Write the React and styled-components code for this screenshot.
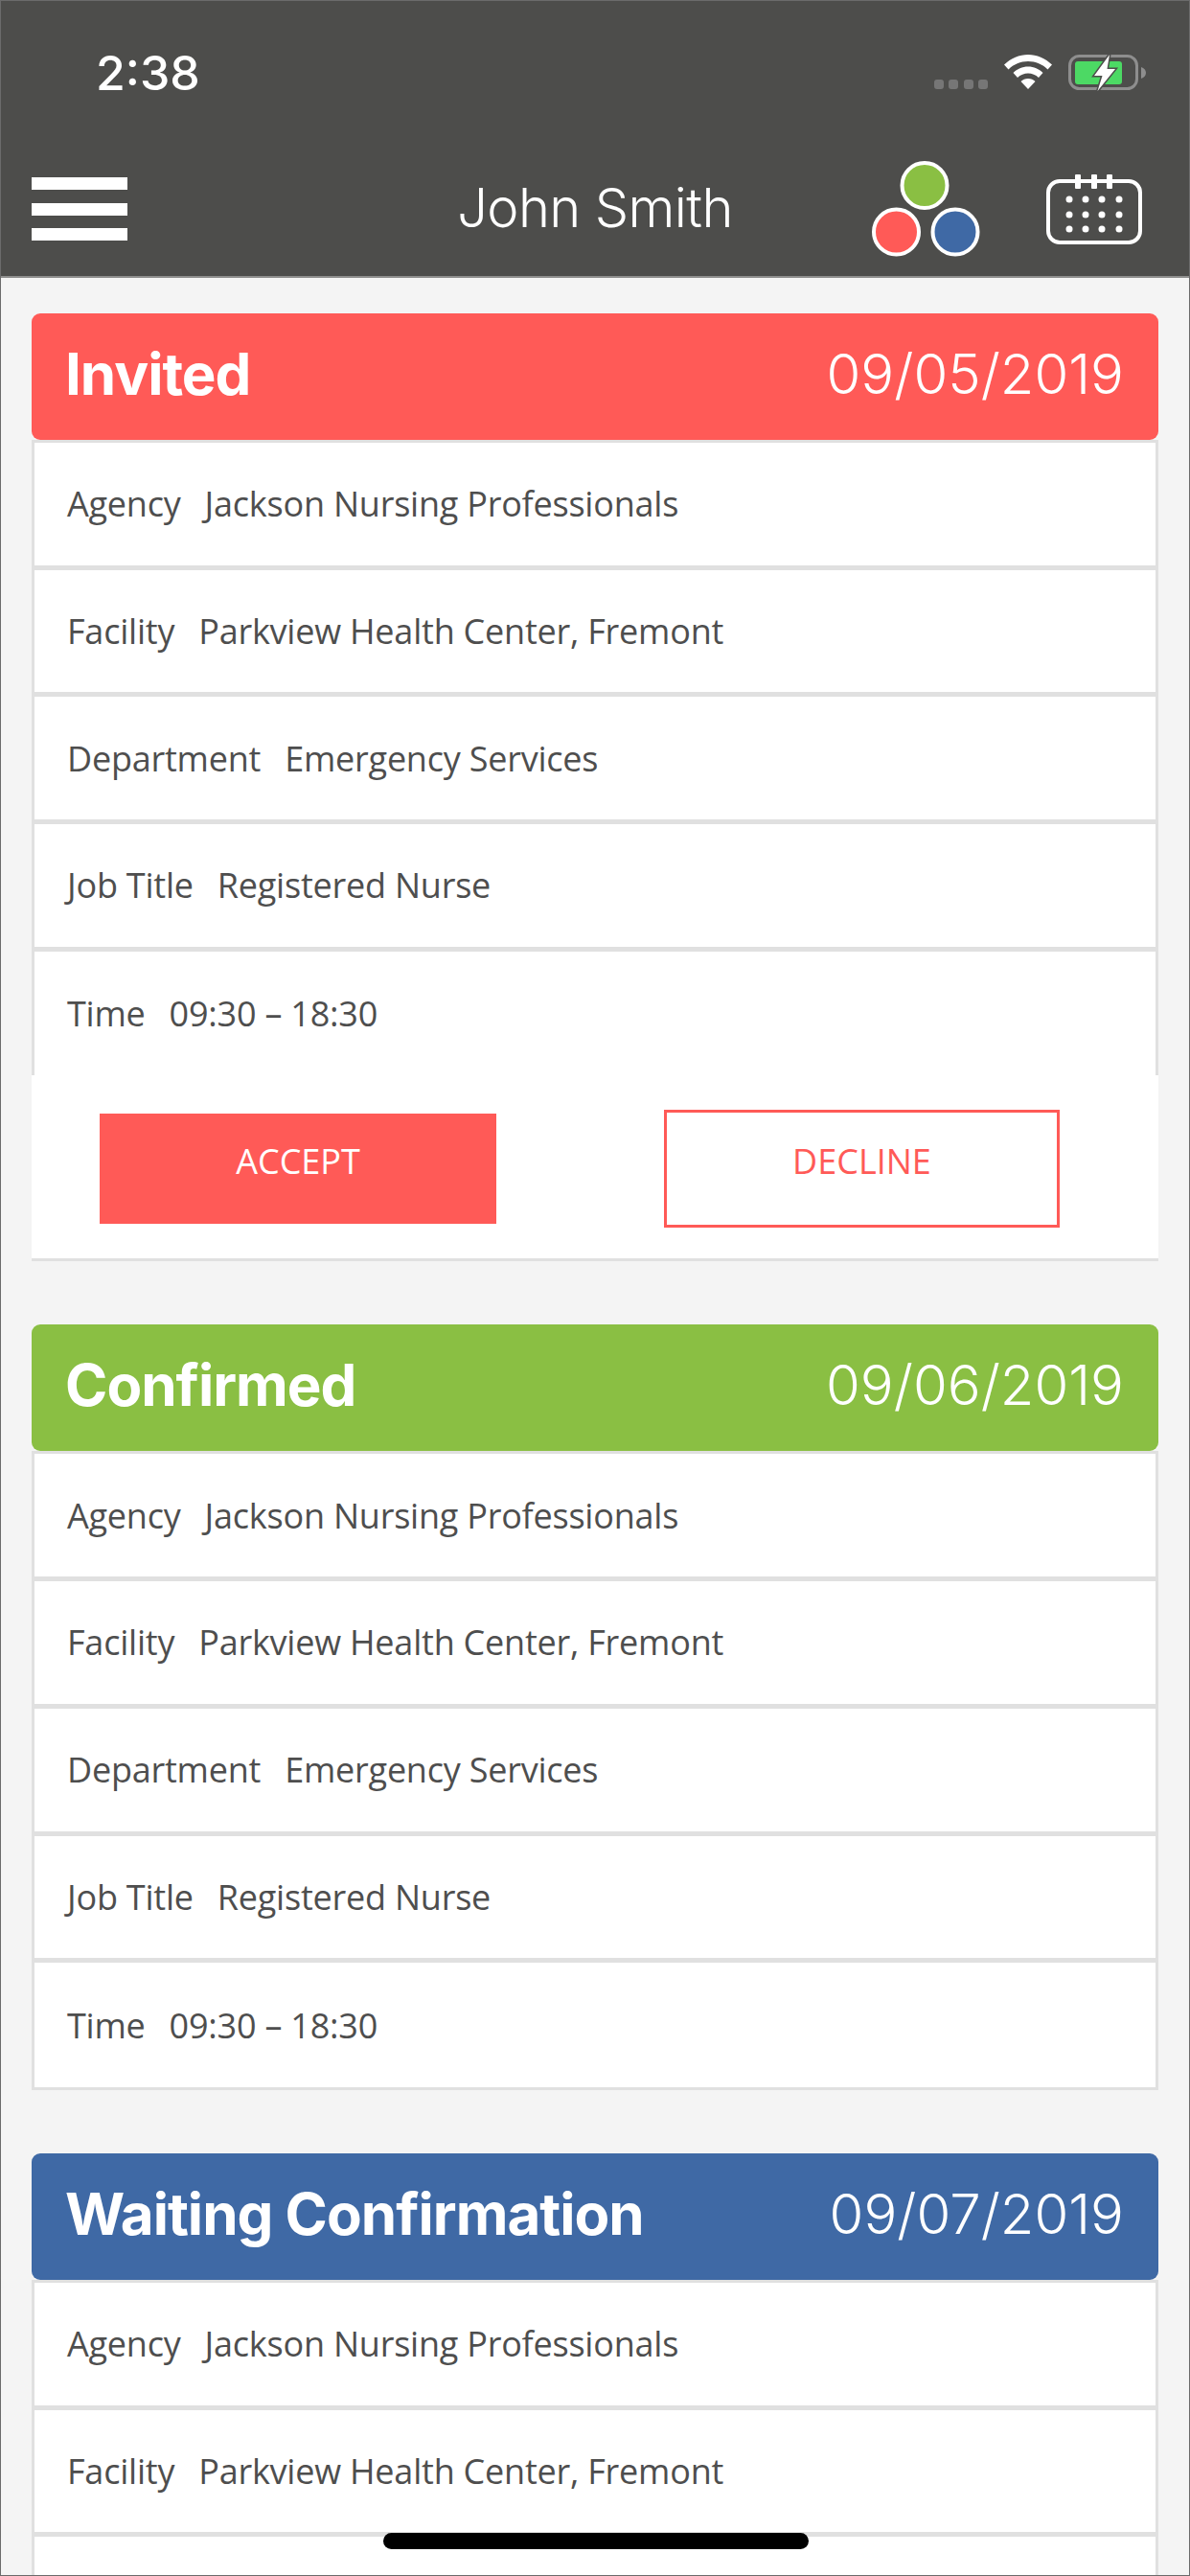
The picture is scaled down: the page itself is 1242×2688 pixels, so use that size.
import React from 'react'
import styled, { createGlobalStyle } from 'styled-components'

const colors = {
  red: '#ff5a57',
  green: '#8abf43',
  blue: '#3f69a5',
  dark: '#4d4d4b',
  line: '#e0e0e0',
  text: '#4e4e4e',
}

const GlobalStyle = createGlobalStyle`
  html, body {
    margin: 0;
    padding: 0;
    background: #f4f4f4;
  }
  * {
    box-sizing: border-box;
  }
`

const Page = styled.div`
  background: #f4f4f4;
  border: 1px solid #6b6b6b;
  height: 2688px;
  overflow: hidden;
  position: relative;
  width: 1242px;
`

const TopBar = styled.header`
  background: ${colors.dark};
  border-bottom: 2px solid #8f8f8e;
  display: flex;
  flex-direction: column;
  height: 289px;
`

const StatusBar = styled.div`
  align-items: flex-start;
  display: flex;
  height: 132px;
  justify-content: space-between;
  padding: 56px 44px 0 99px;
`

const Clock = styled.span`
  color: #fff;
  font-family: Inter, "Liberation Sans", sans-serif;
  font-size: 50px;
  font-weight: 500;
  line-height: 38px;
`

const StatusIcons = styled.div`
  align-items: flex-start;
  display: flex;
`

const SignalDots = styled.div`
  display: flex;
  gap: 5.5px;
  margin: 26px 17px 0 0;
`

const SignalDot = styled.span`
  background: #767676;
  border-radius: 3px;
  height: 10px;
  width: 10px;
`

const WifiIcon = styled.svg`
  display: block;
  margin-right: 17px;
`

const NavRow = styled.nav`
  align-items: start;
  display: grid;
  flex: 1;
  grid-template-columns: 1fr auto 1fr;
  padding: 0 49px 0 32px;
`

const MenuButton = styled.div`
  display: flex;
  flex-direction: column;
  gap: 13.5px;
  margin-top: 52px;
  width: 100px;
`

const MenuBar = styled.span`
  background: #fff;
  display: block;
  height: 13px;
`

const UserName = styled.div`
  color: #fff;
  font-family: Inter, "Liberation Sans", sans-serif;
  font-size: 56px;
  font-weight: 300;
  letter-spacing: -0.6px;
  line-height: 60px;
  margin: 54px 0 0 17px;
  text-align: center;
`

const NavIcons = styled.div`
  align-items: flex-start;
  display: flex;
  justify-content: flex-end;
  gap: 65px;
  padding-top: 35px;
`

const CalendarSvg = styled.svg`
  display: block;
  margin-top: 14px;
`

const CardList = styled.main`
  display: flex;
  flex-direction: column;
  gap: 66px;
  padding: 37px 32px 0;
`

const Card = styled.section`
  display: flex;
  flex-direction: column;
`

const CardHeader = styled.div`
  align-items: center;
  background: ${({ $tone }) => colors[$tone]};
  border-radius: 9px;
  color: #fff;
  display: flex;
  font-family: Inter, "Liberation Sans", sans-serif;
  height: 132px;
  justify-content: space-between;
  padding: 0 36px 6px 35px;
`

const Status = styled.h2`
  font-size: 60px;
  font-weight: 700;
  letter-spacing: -1px;
  margin: 0;
`

const DateText = styled.span`
  font-size: 58px;
  font-weight: 350;
`

const Row = styled.div`
  align-items: center;
  background: #fff;
  border: 3px solid ${colors.line};
  border-bottom-width: ${({ $closing }) => ($closing ? 3 : 2)}px;
  border-bottom-style: ${({ $open }) => ($open ? 'none' : 'solid')};
  color: ${colors.text};
  display: flex;
  font-family: "Open Sans", "Liberation Sans", sans-serif;
  font-size: 36px;
  gap: 25px;
  height: ${({ $closing }) => ($closing ? 135.7 : 132.7)}px;
  letter-spacing: -0.22px;
  padding: 0 0 0 34px;
`

const ActionPanel = styled.div`
  background: #fff;
  border-bottom: 3px solid ${colors.line};
  display: flex;
  height: 194px;
  justify-content: space-between;
  padding: 36px 103px 0 71px;
`

const ActionButton = styled.button`
  background: ${({ $filled }) => ($filled ? colors.red : '#fff')};
  border: ${({ $filled }) => ($filled ? 'none' : `3px solid ${colors.red}`)};
  border-radius: 0;
  color: ${({ $filled }) => ($filled ? '#fff' : colors.red)};
  font-family: "Open Sans", "Liberation Sans", sans-serif;
  font-size: 36px;
  height: ${({ $filled }) => ($filled ? 115 : 123)}px;
  margin-top: ${({ $filled }) => ($filled ? 4 : 0)}px;
  padding: 0 0 16px;
  width: ${({ $filled }) => ($filled ? 414 : 413)}px;
`

const HomeIndicator = styled.div`
  background: #000;
  border-radius: 9px;
  bottom: 27px;
  height: 17px;
  left: 399px;
  position: absolute;
  width: 444px;
`

const details = [
  ['Agency', 'Jackson Nursing Professionals'],
  ['Facility', 'Parkview Health Center, Fremont'],
  ['Department', 'Emergency Services'],
  ['Job Title', 'Registered Nurse'],
  ['Time', '09:30 – 18:30'],
]

// the last card runs off the bottom of the screen, only two rows are readable
const shifts = [
  { status: 'Invited', date: '09/05/2019', tone: 'red', rows: details, actions: true },
  { status: 'Confirmed', date: '09/06/2019', tone: 'green', rows: details },
  { status: 'Waiting Confirmation', date: '09/07/2019', tone: 'blue', rows: details.slice(0, 2), cutOff: true },
]

const Battery = () => (
  <svg width="82" height="40" viewBox="0 0 82 40">
    <rect x="1.5" y="1.5" width="70" height="34" rx="10" fill="none" stroke="#8e8e8e" strokeWidth="3" />
    <rect x="7" y="7" width="49" height="24" rx="3" fill="#4cd964" />
    <path d="M76 13 C79 14 81 16 81 19 C81 22 79 24 76 25 Z" fill="#8e8e8e" />
    <path
      d="M43 0 L27 22 H35.5 L30.5 38 L49 15 H40.5 Z"
      fill="#fff"
      stroke={colors.dark}
      strokeWidth="3"
      paintOrder="stroke"
    />
  </svg>
)

const StatusDots = () => (
  <svg width="120" height="100" viewBox="0 0 120 100">
    <circle cx="58" cy="25.5" r="23.5" fill={colors.green} stroke="#fff" strokeWidth="4" />
    <circle cx="28.5" cy="74" r="23.5" fill={colors.red} stroke="#fff" strokeWidth="4" />
    <circle cx="90" cy="74" r="23.5" fill={colors.blue} stroke="#fff" strokeWidth="4" />
  </svg>
)

const CalendarIcon = () => {
  const columns = [24, 41, 58, 76]
  const rows = [26, 42, 57]
  return (
    <CalendarSvg width="100" height="74" viewBox="0 0 100 74">
      <rect x="2" y="7" width="96" height="64" rx="12" fill="none" stroke="#fff" strokeWidth="4" />
      {[33, 50, 66].map((x) => (
        <rect key={x} x={x - 3} y="0" width="6" height="15" rx="1" fill="#fff" />
      ))}
      {rows.map((y) =>
        columns.map((x) => <circle key={`${x}-${y}`} cx={x} cy={y} r="3.5" fill="#fff" />)
      )}
    </CalendarSvg>
  )
}

const App = () => (
  <Page>
    <GlobalStyle />
    <TopBar>
      <StatusBar>
        <Clock>2:38</Clock>
        <StatusIcons>
          <SignalDots>
            <SignalDot />
            <SignalDot />
            <SignalDot />
            <SignalDot />
          </SignalDots>
          <WifiIcon width="50" height="36" viewBox="0 0 50 36" fill="#fff">
            <path d="M25 0 C34 0 43 4 50 10.5 L45.5 15.5 C40 10 33 7 25 7 C17 7 10 10 4.5 15.5 L0 10.5 C7 4 16 0 25 0 Z" />
            <path d="M25 12.5 C31 12.5 36.5 15 40.5 19 L36 24 C33 21 29 19.5 25 19.5 C21 19.5 17 21 14 24 L9.5 19 C13.5 15 19 12.5 25 12.5 Z" />
            <path d="M25 25 C28 25 30.5 26 32.5 28 L25 36 L17.5 28 C19.5 26 22 25 25 25 Z" />
          </WifiIcon>
          <Battery />
        </StatusIcons>
      </StatusBar>
      <NavRow>
        <MenuButton>
          <MenuBar />
          <MenuBar />
          <MenuBar />
        </MenuButton>
        <UserName>John Smith</UserName>
        <NavIcons>
          <StatusDots />
          <CalendarIcon />
        </NavIcons>
      </NavRow>
    </TopBar>
    <CardList>
      {shifts.map(({ status, date, tone, rows, actions, cutOff }) => (
        <Card key={status}>
          <CardHeader $tone={tone}>
            <Status>{status}</Status>
            <DateText>{date}</DateText>
          </CardHeader>
          {rows.map(([label, value], index) => {
            const last = index === rows.length - 1 && !cutOff
            return (
              <Row key={label} $closing={last && !actions} $open={last && actions}>
                <span>{label}</span>
                <span>{value}</span>
              </Row>
            )
          })}
          {cutOff && <Row />}
          {actions && (
            <ActionPanel>
              <ActionButton $filled>ACCEPT</ActionButton>
              <ActionButton>DECLINE</ActionButton>
            </ActionPanel>
          )}
        </Card>
      ))}
    </CardList>
    <HomeIndicator />
  </Page>
)

export default App
